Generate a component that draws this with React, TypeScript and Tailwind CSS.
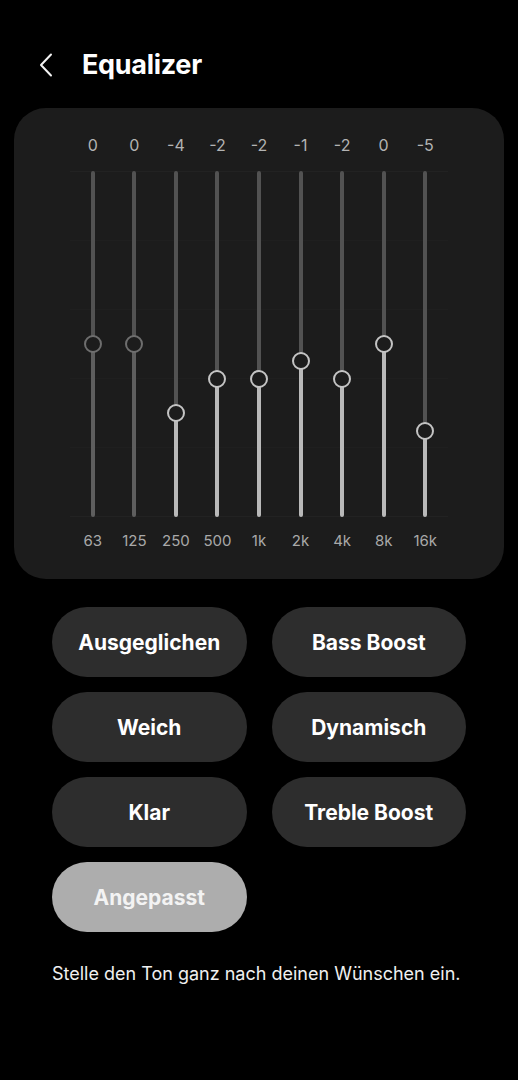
import React from "react";

const bands = [
  { freq: "63", value: 0, dim: true },
  { freq: "125", value: 0, dim: true },
  { freq: "250", value: -4 },
  { freq: "500", value: -2 },
  { freq: "1k", value: -2 },
  { freq: "2k", value: -1 },
  { freq: "4k", value: -2 },
  { freq: "8k", value: 0 },
  { freq: "16k", value: -5 },
];

const presets = [
  "Ausgeglichen",
  "Bass Boost",
  "Weich",
  "Dynamisch",
  "Klar",
  "Treble Boost",
];

const TRACK_H = 346;

function Band({ freq, value, dim }: { freq: string; value: number; dim?: boolean }) {
  // range -10..+10, 0 sits in the middle
  const pct = ((10 - value) / 20) * 100;
  const upper = "#525252";
  const lower = dim ? "#5e5e5e" : "#b9b9b9";
  const ring = dim ? "#6e6e6e" : "#c4c4c4";

  return (
    <div className="flex flex-col items-center">
      <div className="text-[16px] leading-[20px] text-[#b3b3b3]">{value}</div>
      <div className="relative mt-[16px] h-[346px] w-full">
        <div
          className="absolute left-1/2 top-0 w-[4px] -translate-x-1/2 rounded-t-full"
          style={{ height: `${pct}%`, background: upper }}
        />
        <div
          className="absolute bottom-0 left-1/2 w-[4px] -translate-x-1/2 rounded-b-full"
          style={{ height: `${100 - pct}%`, background: lower }}
        />
        <div
          className="absolute left-1/2 h-[18px] w-[18px] -translate-x-1/2 -translate-y-1/2 rounded-full border-[2.5px] bg-[#1c1c1c]"
          style={{ top: `${(pct / 100) * TRACK_H}px`, borderColor: ring }}
        />
      </div>
      <div className="mt-[14px] text-[15px] leading-[20px] text-[#a9a9a9]">{freq}</div>
    </div>
  );
}

export default function App() {
  return (
    <div
      className="min-h-screen bg-black pt-[43px] text-white"
      style={{ fontFamily: "Inter, 'Noto Sans', sans-serif" }}
    >
      <div className="flex h-[44px] items-center">
        <svg className="ml-[38px] h-[24px] w-[16px]" viewBox="0 0 16 24" fill="none">
          <path d="M13 1.5 L3 12 L13 22.5" stroke="#f2f2f2" strokeWidth="2" strokeLinecap="round" strokeLinejoin="round" />
        </svg>
        <h1 className="ml-[28px] text-[27px] font-bold tracking-[-0.3px]">Equalizer</h1>
      </div>

      <div className="relative mx-[14px] mt-[21px] h-[471px] rounded-[32px] bg-[#1c1c1c] px-[58px] pt-[27px]">
        {/* faint grid lines */}
        <div className="absolute left-[56px] right-[56px] top-[63px] flex h-[346px] flex-col justify-between">
          <div className="h-px bg-[#222222]" />
          <div className="h-px bg-[#1f1f1f]" />
          <div className="h-px bg-[#1f1f1f]" />
          <div className="h-px bg-[#1f1f1f]" />
          <div className="h-px bg-[#1f1f1f]" />
          <div className="h-px bg-[#222222]" />
        </div>
        <div className="relative grid grid-cols-9">
          {bands.map((b) => (
            <Band key={b.freq} {...b} />
          ))}
        </div>
      </div>

      <div className="mt-[28px] grid grid-cols-2 gap-x-[25px] gap-y-[15px] px-[52px]">
        {presets.map((p) => (
          <button
            key={p}
            className="h-[70px] rounded-full bg-[#2d2d2d] pt-[2px] text-[21px] font-bold text-white"
          >
            {p}
          </button>
        ))}
        <button className="h-[70px] rounded-full bg-[#adadad] pt-[2px] text-[21px] font-bold text-[#f3f3f3]">
          Angepasst
        </button>
      </div>

      <p className="mt-[30px] px-[52px] text-[18px] leading-[24px] text-[#f0f0f0]">
        Stelle den Ton ganz nach deinen Wünschen ein.
      </p>
    </div>
  );
}
